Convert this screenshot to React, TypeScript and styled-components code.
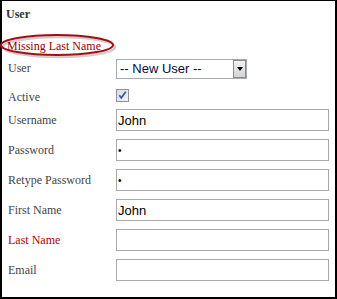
import React from "react";
import styled, { createGlobalStyle } from "styled-components";

const GlobalStyle = createGlobalStyle`
  html, body { margin: 0; padding: 0; background: #ffffff; }
  body { font-family: "Liberation Serif", "Times New Roman", serif; }
`;

const Card = styled.section`
  box-sizing: border-box;
  width: 337px;
  height: 299px;
  border-style: solid;
  border-color: #000;
  border-width: 1px 2px 2px 2px;
  background: #fff;
  padding: 6px 6px 0 4px;
  display: flex;
  flex-direction: column;
`;

const Title = styled.h2`
  margin: 0;
  font: bold 12px/14px "Liberation Serif", "Times New Roman", serif;
  color: #333333;
`;

const ErrorWrap = styled.div`
  position: relative;
  margin-top: 18px;
  height: 14px;
`;

const ErrorText = styled.div`
  position: relative;
  margin-left: 1px;
  font: 12px/14px "Liberation Serif", "Times New Roman", serif;
  color: #9a0000;
`;

const Ellipse = styled.svg`
  position: absolute;
  left: -4px;
  top: -6px;
  width: 122px;
  height: 28px;
  overflow: visible;
  pointer-events: none;
`;

const Form = styled.div`
  margin-top: 5px;
  margin-left: 2px;
  display: flex;
  flex-direction: column;
  gap: 8px;
`;

const Row = styled.div<{ $h: number }>`
  display: grid;
  grid-template-columns: 108px 213px;
  align-items: center;
  height: ${(p) => p.$h}px;
`;

const Label = styled.label<{ $error?: boolean; $nudge?: number }>`
  font: 12px/14px "Liberation Serif", "Times New Roman", serif;
  color: ${(p) => (p.$error ? "#b00000" : "#444444")};
  position: relative;
  top: ${(p) => p.$nudge ?? 0}px;
  white-space: nowrap;
`;

const TextInput = styled.input`
  box-sizing: border-box;
  width: 213px;
  height: 22px;
  margin: 0;
  padding: 0 1px;
  border: 1px solid #a9a9a9;
  outline: none;
  background: #fff;
  font: 13px "Liberation Sans", Arial, sans-serif;
  color: #000;
  &[type="password"] {
    font-size: 10px;
    padding-left: 1px;
  }
`;

const SelectBox = styled.div`
  box-sizing: border-box;
  width: 131px;
  height: 20px;
  border: 1px solid #a5a9b0;
  display: flex;
  align-items: stretch;
  background: #fff;
`;

const SelectText = styled.span`
  flex: 1;
  padding-left: 3px;
  font: 13px/18px "Liberation Sans", Arial, sans-serif;
  color: #0a0a30;
`;

const SelectButton = styled.span`
  box-sizing: border-box;
  width: 13px;
  border: 1px solid #8a8a8a;
  background: linear-gradient(#f2f2f2, #d4d4d4);
  display: flex;
  align-items: center;
  justify-content: center;
`;

const Arrow = styled.span`
  width: 0;
  height: 0;
  border-left: 3.5px solid transparent;
  border-right: 3.5px solid transparent;
  border-top: 4px solid #000;
`;

const CheckBox = styled.span`
  display: inline-flex;
  width: 13px;
  height: 13px;
`;

export default function App() {
  return (
    <>
      <GlobalStyle />
      <Card>
        <Title>User</Title>
        <ErrorWrap>
          <Ellipse viewBox="0 0 122 28">
            <ellipse cx="57" cy="14" rx="56" ry="10" fill="none" stroke="#b9b9b9" strokeWidth="2.5" opacity="0.7" />
            <ellipse cx="55" cy="12" rx="56" ry="10" fill="none" stroke="#a30d16" strokeWidth="2" />
          </Ellipse>
          <ErrorText>Missing Last Name</ErrorText>
        </ErrorWrap>
        <Form>
          <Row $h={22}>
            <Label $nudge={-1}>User</Label>
            <SelectBox role="combobox" aria-label="User">
              <SelectText>-- New User --</SelectText>
              <SelectButton>
                <Arrow />
              </SelectButton>
            </SelectBox>
          </Row>
          <Row $h={13}>
            <Label $nudge={1.5}>Active</Label>
            <CheckBox role="checkbox" aria-checked="true" aria-label="Active">
              <svg width="13" height="13" viewBox="0 0 13 13">
                <defs>
                  <linearGradient id="cbg" x1="0" y1="0" x2="1" y2="1">
                    <stop offset="0" stopColor="#d9d9df" />
                    <stop offset="1" stopColor="#f4f4f6" />
                  </linearGradient>
                </defs>
                <rect x="0.5" y="0.5" width="12" height="12" fill="url(#cbg)" stroke="#8e91a0" />
                <path d="M3.2 6.2 L5.3 8.8 L9.8 2.8" fill="none" stroke="#3b5aa0" strokeWidth="1.8" />
              </svg>
            </CheckBox>
          </Row>
          <Row $h={22}>
            <Label>Username</Label>
            <TextInput type="text" defaultValue="John" readOnly />
          </Row>
          <Row $h={22}>
            <Label>Password</Label>
            <TextInput type="password" defaultValue="x" readOnly />
          </Row>
          <Row $h={22}>
            <Label>Retype Password</Label>
            <TextInput type="password" defaultValue="x" readOnly />
          </Row>
          <Row $h={22}>
            <Label>First Name</Label>
            <TextInput type="text" defaultValue="John" readOnly />
          </Row>
          <Row $h={22}>
            <Label $error>Last Name</Label>
            <TextInput type="text" defaultValue="" readOnly />
          </Row>
          <Row $h={22}>
            <Label>Email</Label>
            <TextInput type="text" defaultValue="" readOnly />
          </Row>
        </Form>
      </Card>
    </>
  );
}
